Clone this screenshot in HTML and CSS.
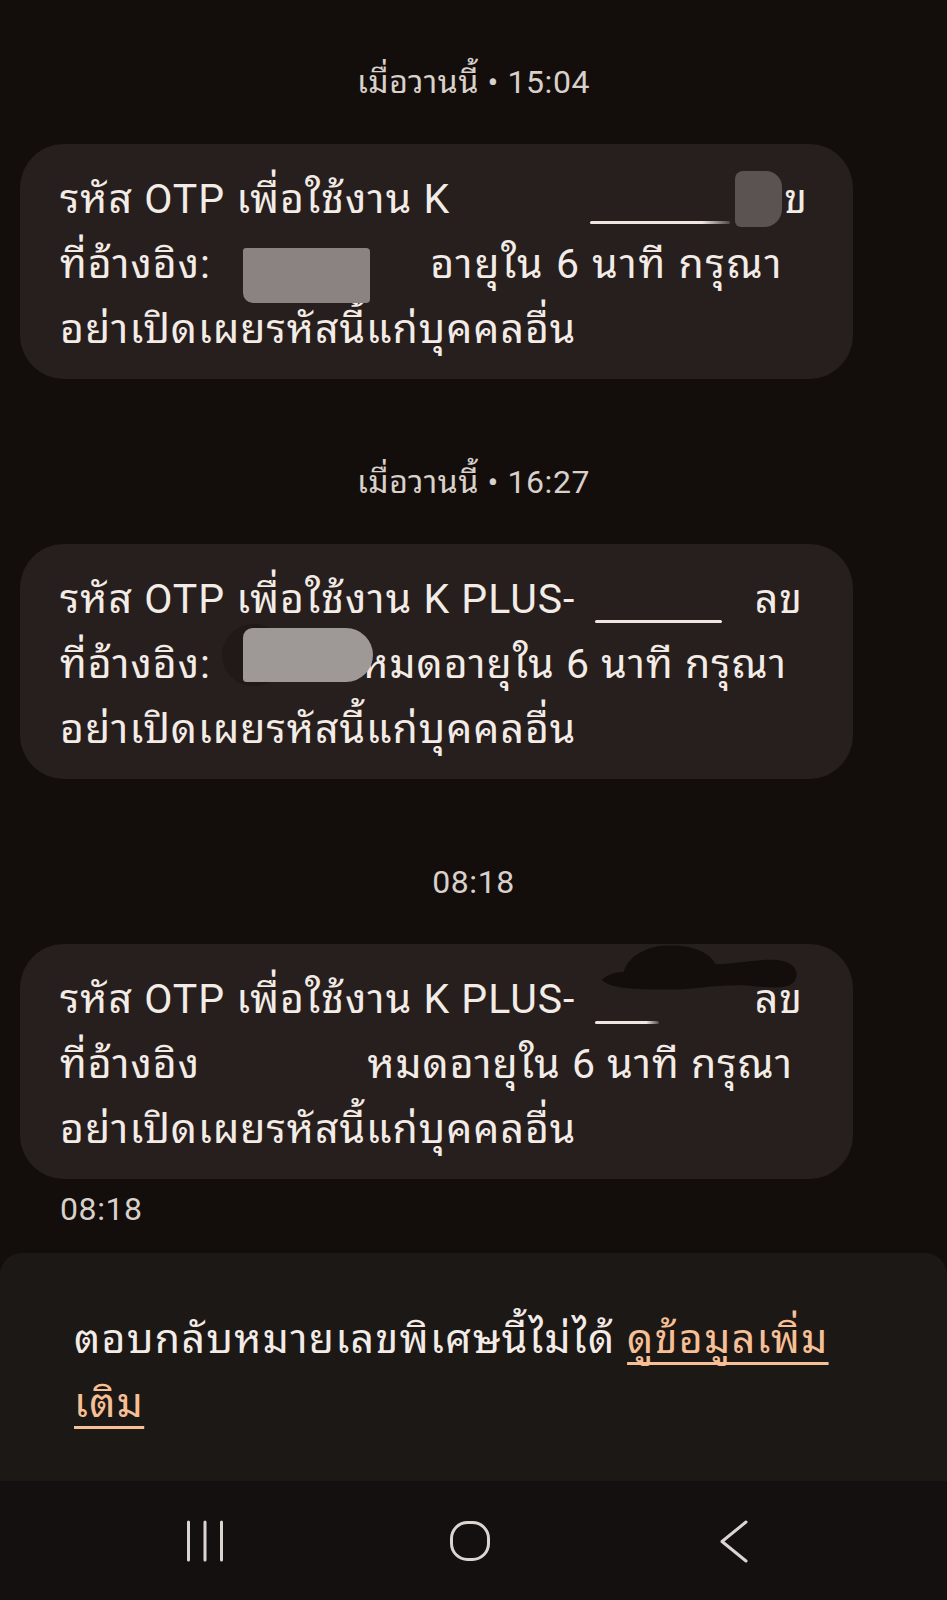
FILE: index.html
```html
<!DOCTYPE html>
<html lang="th">
<head>
<meta charset="utf-8">
<title>ข้อความ</title>
<link rel="stylesheet" href="styles.css">
</head>
<body>
<div class="screen">
  <main class="chat">
    <section class="day">
      <div class="stamp">เมื่อวานนี้ • 15:04</div>
      <div class="bubble">
        <div class="line"><span>รหัส OTP เพื่อใช้งาน K</span><span class="tail t1a">ลข</span></div>
        <div class="line"><span>ที่อ้างอิง:</span><span class="tail t1b">อายุใน 6 นาที กรุณา</span></div>
        <div class="line"><span>อย่าเปิดเผยรหัสนี้แก่บุคคลอื่น</span></div>
        <span class="mask uline u1"></span>
        <span class="mask blob b1a"></span>
        <span class="mask blob b1b"></span>
      </div>
    </section>
    <section class="day">
      <div class="stamp">เมื่อวานนี้ • 16:27</div>
      <div class="bubble">
        <div class="line"><span>รหัส OTP เพื่อใช้งาน K PLUS-</span><span class="tail t2a">ลข</span></div>
        <div class="line"><span>ที่อ้างอิง:</span><span class="tail t2b">หมดอายุใน 6 นาที กรุณา</span></div>
        <div class="line"><span>อย่าเปิดเผยรหัสนี้แก่บุคคลอื่น</span></div>
        <span class="mask uline u2"></span>
        <span class="mask shade"></span>
        <span class="mask blob b2"></span>
      </div>
    </section>
    <section class="day">
      <div class="stamp">08:18</div>
      <div class="bubble">
        <div class="line"><span>รหัส OTP เพื่อใช้งาน K PLUS-</span><span class="tail t3a">ลข</span></div>
        <div class="line"><span>ที่อ้างอิง</span><span class="tail t3b">หมดอายุใน 6 นาที กรุณา</span></div>
        <div class="line"><span>อย่าเปิดเผยรหัสนี้แก่บุคคลอื่น</span></div>
        <span class="mask uline u3"></span>
        <svg class="mask scribble" viewBox="0 0 200 48" aria-hidden="true">
          <path d="M0 36 C6 30 14 28 22 28 C26 14 42 2 66 1 C92 0 110 8 116 20 C136 20 160 14 180 16 C198 18 202 30 196 38 C190 46 170 44 150 42 C120 40 96 46 70 46 C40 46 8 46 0 36 Z" fill="#130e0c"/>
        </svg>
      </div>
      <div class="time">08:18</div>
    </section>
  </main>
  <footer class="notice">
    <p>ตอบกลับหมายเลขพิเศษนี้ไม่ได้ <a href="#">ดูข้อมูลเพิ่ม<wbr>เติม</a></p>
  </footer>
  <nav class="navbar">
    <span class="nav-btn">
      <svg viewBox="0 0 44 44" width="44" height="44"><path d="M5.5 3v38M22 3v38M38.5 3v38" stroke="#dcd4d0" stroke-width="3" stroke-linecap="round" fill="none"/></svg>
    </span>
    <span class="nav-btn">
      <svg viewBox="0 0 44 44" width="44" height="44"><rect x="3.5" y="3.5" width="37" height="37" rx="16" stroke="#dcd4d0" stroke-width="3" fill="none"/></svg>
    </span>
    <span class="nav-btn">
      <svg viewBox="0 0 44 44" width="44" height="44"><path d="M33 3L9 22.5L33 42" stroke="#dcd4d0" stroke-width="3" stroke-linecap="round" stroke-linejoin="round" fill="none"/></svg>
    </span>
  </nav>
</div>
</body>
</html>
```

FILE: styles.css
```css
* { box-sizing: border-box; }
html, body { margin: 0; padding: 0; background: #130e0c; }
.screen {
  width: 947px;
  height: 1600px;
  display: flex;
  flex-direction: column;
  font-family: Roboto, "Noto Sans Thai Looped", "Noto Looped Thai", "Loma", "Garuda", "Noto Sans", "Noto Sans Thai", sans-serif;
  color: #f3ebe6;
  overflow: hidden;
}
.chat {
  flex: 1;
  padding: 62px 0 0 0;
}
.day { display: flex; flex-direction: column; }
.day + .day { margin-top: 83px; }
.stamp {
  text-align: center;
  font-size: 32px;
  letter-spacing: 0.6px;
  line-height: 40px;
  height: 40px;
  color: #d9d0ca;
  margin-bottom: 42px;
}
.bubble {
  position: relative;
  margin: 0 94px 0 20px;
  background: #261f1d;
  border-radius: 44px;
  padding: 23px 40px 17px 40px;
  font-size: 41px;
  letter-spacing: 1px;
  line-height: 65px;
}
.line {
  display: flex;
  white-space: nowrap;
  height: 65px;
}
.tail { margin-left: auto; }
.t1a { margin-right: 5px; }
.t1b { margin-right: 30px; letter-spacing: 1.6px; }
.t2a { margin-right: 10px; }
.t2b { margin-right: 26px; }
.t3a { margin-right: 10px; }
.t3b { margin-right: 20px; }

.mask { position: absolute; display: block; }
.uline {
  height: 3px;
  border-radius: 2px;
  background: linear-gradient(to right, #efe6e1 80%, rgba(239, 230, 225, 0.2));
}
.u1 { left: 570px; top: 77px; width: 140px; }
.u2 { left: 575px; top: 76px; width: 127px; background: #efe6e1; }
.u3 { left: 575px; top: 77px; width: 64px; }
.blob { background: #8a8381; }
.b1a {
  left: 715px; top: 27px; width: 47px; height: 56px;
  background: #5b5351;
  border-radius: 8px 16px 18px 6px;
}
.b1b {
  left: 223px; top: 104px; width: 127px; height: 55px;
  border-radius: 3px 4px 4px 10px;
}
.shade {
  left: 202px; top: 80px; width: 64px; height: 62px;
  border-radius: 50%;
  background: #201917;
}
.b2 {
  left: 223px; top: 84px; width: 130px; height: 54px;
  background: #9e9896;
  border-radius: 10px 28px 28px 4px;
}
.scribble {
  left: 582px; top: 0; width: 196px; height: 48px;
}
.time {
  margin: 10px 0 0 60px;
  font-size: 32px;
  letter-spacing: 0.6px;
  line-height: 40px;
  color: #d9d0ca;
}
.notice {
  background: #1c1816;
  border-radius: 22px 22px 0 0;
  padding: 54px 80px 38px 74px;
  height: 228px;
}
.notice p {
  margin: 0;
  font-size: 41px;
  letter-spacing: 1.4px;
  line-height: 64px;
  color: #f3ebe6;
}
.notice a {
  color: #f6bf95;
  text-decoration: underline;
  text-decoration-thickness: 3px;
  text-underline-offset: 9px;
  text-decoration-skip-ink: none;
}
.navbar {
  height: 119px;
  background: #141010;
  display: grid;
  grid-template-columns: repeat(3, 265px);
  justify-content: center;
  align-items: center;
  padding: 0 7px 0 0;
}
.nav-btn {
  display: flex;
  justify-content: center;
  align-items: center;
  height: 44px;
}
.nav-btn svg { display: block; }
```
